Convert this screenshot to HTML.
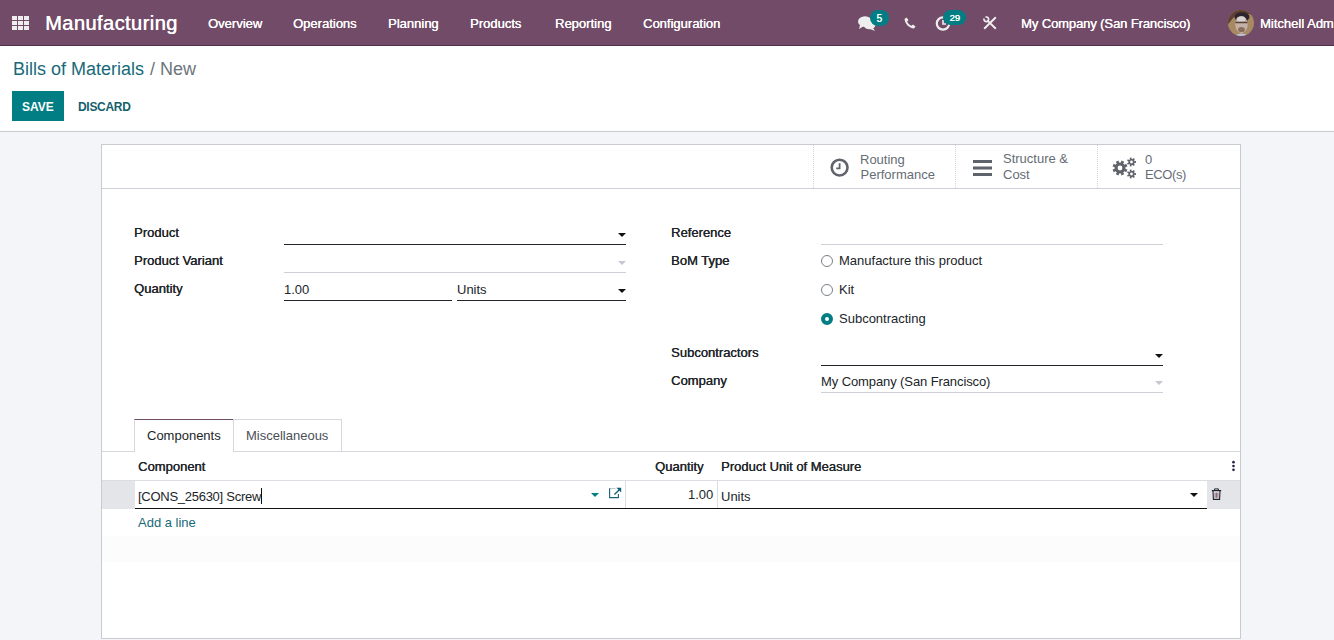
<!DOCTYPE html>
<html><head><meta charset="utf-8">
<style>
*{margin:0;padding:0;box-sizing:border-box}
html,body{width:1334px;height:640px;overflow:hidden;background:#F4F5F9;font-family:"Liberation Sans",sans-serif;font-size:13px;color:#212529}
.a{position:absolute;white-space:nowrap;line-height:1}
#nav{position:absolute;left:0;top:0;width:1334px;height:46px;background:#714B67;border-bottom:1px solid #50304A}
#nav .a{color:#fff;text-shadow:0.25px 0 0 #fff}
#cp{position:absolute;left:0;top:46px;width:1334px;height:86px;background:#fff;border-bottom:1px solid #C9CBD1}
#sheet{position:absolute;left:101px;top:144px;width:1140px;height:495px;background:#fff;border:1px solid #C9CBD1}
.ln{position:absolute;height:1px;background:#212529}
.lg{position:absolute;height:1px;background:#CDD0D6}
.lbl{color:#212529;text-shadow:0.35px 0 0 #212529}
.caret{position:absolute;width:0;height:0;border-left:4px solid transparent;border-right:4px solid transparent;border-top:4px solid #111}
.caretg{border-top-color:#C5C8CE}
.radio{position:absolute;width:12px;height:12px;border-radius:50%;border:1px solid #7a7f87;background:#fff}
.bb{color:#666c75}
</style></head><body>
<div id="nav">
  <!-- app grid -->
  <svg style="position:absolute;left:12px;top:16px" width="17" height="14" viewBox="0 0 17 14">
    <g fill="#eee">
      <rect x="0" y="0" width="5" height="4"/><rect x="6" y="0" width="5" height="4"/><rect x="12" y="0" width="5" height="4"/>
      <rect x="0" y="5" width="5" height="4"/><rect x="6" y="5" width="5" height="4"/><rect x="12" y="5" width="5" height="4"/>
      <rect x="0" y="10" width="5" height="4"/><rect x="6" y="10" width="5" height="4"/><rect x="12" y="10" width="5" height="4"/>
    </g>
  </svg>
  <span class="a" style="left:45px;top:13px;font-size:20px;letter-spacing:0.45px;text-shadow:0.5px 0 0 #fff">Manufacturing</span>
  <span class="a" style="left:208px;top:17px">Overview</span>
  <span class="a" style="left:293px;top:17px">Operations</span>
  <span class="a" style="left:388px;top:17px">Planning</span>
  <span class="a" style="left:470px;top:17px">Products</span>
  <span class="a" style="left:555px;top:17px">Reporting</span>
  <span class="a" style="left:643px;top:17px">Configuration</span>

  <!-- chat -->
  <svg style="position:absolute;left:858px;top:16px" width="18" height="15" viewBox="0 0 18 15">
    <ellipse cx="7" cy="5.5" rx="7" ry="5.2" fill="#eee"/>
    <path d="M2 9 L1 13 L6 10 Z" fill="#eee"/>
    <ellipse cx="11.5" cy="9" rx="6" ry="4.2" fill="#eee"/>
    <path d="M15 12 L17 15 L12 13 Z" fill="#eee"/>
  </svg>
  <div style="position:absolute;left:870px;top:10px;width:19px;height:16px;border-radius:8px;background:#017E84"></div>
  <span class="a" style="left:876.5px;top:14px;font-size:10px;text-shadow:0.3px 0 0 #fff">5</span>
  <!-- phone -->
  <svg style="position:absolute;left:904px;top:17px" width="12" height="12" viewBox="0 0 12 12">
    <path d="M2.5 0.5 L4.5 3 L3.2 4.6 C4 6.6 5.4 8 7.4 8.8 L9 7.5 L11.5 9.5 L10 11.5 C5 11 1 7 0.5 2 Z" fill="#eee"/>
  </svg>
  <!-- activity clock -->
  <svg style="position:absolute;left:935px;top:15px" width="17" height="17" viewBox="0 0 17 17">
    <circle cx="8" cy="8.5" r="6.2" fill="none" stroke="#eee" stroke-width="2.2"/>
    <path d="M8 5 V9 H11" fill="none" stroke="#eee" stroke-width="1.6"/>
  </svg>
  <div style="position:absolute;left:943px;top:10px;width:23px;height:15px;border-radius:8px;background:#017E84"></div>
  <span class="a" style="left:949.5px;top:13px;font-size:9.5px;text-shadow:0.3px 0 0 #fff">29</span>
  <!-- tools -->
  <svg style="position:absolute;left:983px;top:16px" width="14" height="14" viewBox="0 0 14 14">
    <path d="M4.6 4.6 L12.8 12.8 M12.8 1.2 L1.2 12.8" stroke="#eee" stroke-width="2"/>
    <path d="M2.51 1.14 A2.3 2.3 0 1 1 1.14 2.51" fill="none" stroke="#eee" stroke-width="1.7"/>
  </svg>
  <span class="a" style="left:1021px;top:17px;letter-spacing:-0.1px">My Company (San Francisco)</span>
  <!-- avatar -->
  <svg style="position:absolute;left:1228px;top:10px" width="26" height="26" viewBox="0 0 26 26">
    <defs><clipPath id="av"><circle cx="13" cy="13" r="13"/></clipPath></defs>
    <g clip-path="url(#av)">
      <rect width="26" height="26" fill="#a88a62"/>
      <path d="M0 0 H26 V6 C20 2 8 2 2 12 L0 14 Z" fill="#5e3f30"/>
      <ellipse cx="14" cy="7" rx="7.5" ry="4.8" fill="#2e2430"/>
      <ellipse cx="13.5" cy="14.5" rx="6.2" ry="8.5" fill="#c4b2a8"/>
      <ellipse cx="13" cy="9" rx="4.5" ry="2.6" fill="#d8d2d2"/>
      <path d="M7.5 12.5 H19.5" stroke="#5a4236" stroke-width="1.5"/>
      <ellipse cx="13.5" cy="19.5" rx="3.4" ry="2.6" fill="#8a6e5c"/>
      <path d="M7 26 C9 22.5 18 22.5 20 26 Z" fill="#b9c2d2"/>
    </g>
  </svg>
  <span class="a" style="left:1260px;top:17px">Mitchell Admin</span>
</div>

<div id="cp">
  <span class="a" style="left:13px;top:14px;font-size:18px;color:#17697a">Bills of Materials</span>
  <span class="a" style="left:150px;top:14px;font-size:18px;color:#6c757d">/ New</span>
  <div style="position:absolute;left:12px;top:45px;width:52px;height:30px;background:#017E84"></div>
  <span class="a" style="left:22px;top:55px;font-size:12px;font-weight:bold;color:#fff">SAVE</span>
  <span class="a" style="left:78px;top:55px;font-size:12px;font-weight:bold;color:#145f6c;letter-spacing:-0.3px">DISCARD</span>
</div>

<div id="sheet"></div>
<!-- button box -->
<div class="lg" style="left:102px;top:188px;width:1138px"></div>
<div style="position:absolute;left:813px;top:145px;width:0;height:43px;border-left:1px dotted #D0D4DA"></div>
<div style="position:absolute;left:955px;top:145px;width:0;height:43px;border-left:1px dotted #D0D4DA"></div>
<div style="position:absolute;left:1097px;top:145px;width:0;height:43px;border-left:1px dotted #D0D4DA"></div>
<svg style="position:absolute;left:830px;top:158px" width="20" height="20" viewBox="0 0 20 20">
  <circle cx="9.6" cy="9.6" r="7.9" fill="none" stroke="#5f636b" stroke-width="2.6"/>
  <path d="M9.6 5.2 V10.4 H6.2" fill="none" stroke="#5f636b" stroke-width="1.8"/>
</svg>
<span class="a bb" style="left:860px;top:153px">Routing</span>
<span class="a bb" style="left:860.5px;top:168px">Performance</span>
<svg style="position:absolute;left:973px;top:160px" width="20" height="16" viewBox="0 0 20 16">
  <g fill="#5f636b"><rect x="0" y="0" width="19" height="3"/><rect x="0" y="6.5" width="19" height="3"/><rect x="0" y="13" width="19" height="3"/></g>
</svg>
<span class="a bb" style="left:1003px;top:152px">Structure &amp;</span>
<span class="a bb" style="left:1003px;top:168px">Cost</span>
<svg style="position:absolute;left:1112px;top:157px" width="25" height="22" viewBox="0 0 25 22">
  <g fill="#5f636b" fill-rule="evenodd">
  <path d="M13.51 11.98 L15.46 12.48 L14.31 15.23 L12.59 14.20 L11.20 15.59 L12.23 17.31 L9.48 18.46 L8.98 16.51 L7.02 16.51 L6.52 18.46 L3.77 17.31 L4.80 15.59 L3.41 14.20 L1.69 15.23 L0.54 12.48 L2.49 11.98 L2.49 10.02 L0.54 9.52 L1.69 6.77 L3.41 7.80 L4.80 6.41 L3.77 4.69 L6.52 3.54 L7.02 5.49 L8.98 5.49 L9.48 3.54 L12.23 4.69 L11.20 6.41 L12.59 7.80 L14.31 6.77 L15.46 9.52 L13.51 10.02 Z M10.40 11.00 A2.4 2.4 0 1 0 5.60 11.00 A2.4 2.4 0 1 0 10.40 11.00 Z"/>
  <path d="M22.60 4.22 L24.01 4.11 L24.01 5.89 L22.60 5.78 L22.05 6.94 L23.01 7.97 L21.61 9.09 L20.82 7.91 L19.57 8.20 L19.37 9.60 L17.62 9.20 L18.05 7.85 L17.04 7.05 L15.82 7.76 L15.05 6.15 L16.37 5.64 L16.37 4.36 L15.05 3.85 L15.82 2.24 L17.04 2.95 L18.05 2.15 L17.62 0.80 L19.37 0.40 L19.57 1.80 L20.82 2.09 L21.61 0.91 L23.01 2.03 L22.05 3.06 Z M20.90 5.00 A1.4 1.4 0 1 0 18.10 5.00 A1.4 1.4 0 1 0 20.90 5.00 Z"/>
  <path d="M22.60 16.22 L24.01 16.11 L24.01 17.89 L22.60 17.78 L22.05 18.94 L23.01 19.97 L21.61 21.09 L20.82 19.91 L19.57 20.20 L19.37 21.60 L17.62 21.20 L18.05 19.850 L17.04 19.05 L15.82 19.76 L15.05 18.15 L16.37 17.64 L16.37 16.36 L15.05 15.85 L15.82 14.24 L17.04 14.95 L18.05 14.15 L17.62 12.80 L19.37 12.40 L19.57 13.80 L20.82 14.09 L21.61 12.91 L23.01 14.03 L22.05 15.06 Z M20.90 17.00 A1.4 1.4 0 1 0 18.10 17.00 A1.4 1.4 0 1 0 20.90 17.00 Z"/>
  </g>
</svg>
<span class="a bb" style="left:1145px;top:153px">0</span>
<span class="a bb" style="left:1145px;top:168px;letter-spacing:-0.4px">ECO(s)</span>

<!-- left group -->
<span class="a lbl" style="left:134px;top:226px">Product</span>
<div class="ln" style="left:284px;top:244px;width:342px"></div>
<div class="caret" style="left:618px;top:233px"></div>
<span class="a lbl" style="left:134px;top:254px">Product Variant</span>
<div class="lg" style="left:284px;top:272px;width:342px"></div>
<div class="caret caretg" style="left:618px;top:261px"></div>
<span class="a lbl" style="left:134px;top:282px">Quantity</span>
<span class="a" style="left:284px;top:283px">1.00</span>
<div class="ln" style="left:284px;top:300px;width:168px"></div>
<span class="a" style="left:457px;top:283px">Units</span>
<div class="ln" style="left:457px;top:300px;width:169px"></div>
<div class="caret" style="left:618px;top:289px"></div>

<!-- right group -->
<span class="a lbl" style="left:671px;top:226px">Reference</span>
<div class="lg" style="left:821px;top:244px;width:342px"></div>
<span class="a lbl" style="left:671px;top:254px">BoM Type</span>
<div class="radio" style="left:821px;top:255px"></div>
<span class="a" style="left:839px;top:254px">Manufacture this product</span>
<div class="radio" style="left:821px;top:284px"></div>
<span class="a" style="left:839px;top:283px">Kit</span>
<div class="radio" style="left:821px;top:313px;border:4px solid #017E84"></div>
<span class="a" style="left:839px;top:312px">Subcontracting</span>
<span class="a lbl" style="left:671px;top:346px">Subcontractors</span>
<div class="ln" style="left:821px;top:365px;width:342px"></div>
<div class="caret" style="left:1155px;top:354px"></div>
<span class="a lbl" style="left:671px;top:374px">Company</span>
<span class="a" style="left:821px;top:375px;letter-spacing:-0.1px">My Company (San Francisco)</span>
<div class="lg" style="left:821px;top:392px;width:342px"></div>
<div class="caret caretg" style="left:1155px;top:381px"></div>

<!-- tabs -->
<div class="lg" style="left:102px;top:451px;width:1138px;background:#D5D8DD"></div>
<div style="position:absolute;left:134px;top:419px;width:100px;height:33px;background:#fff;border:1px solid #D5D8DD;border-top-color:#714B67;border-bottom:none"></div>
<div style="position:absolute;left:233px;top:419px;width:109px;height:32px;border:1px solid #D5D8DD;border-bottom:none"></div>
<span class="a" style="left:147px;top:429px;color:#212529">Components</span>
<span class="a" style="left:246px;top:429px;color:#4a4f57">Miscellaneous</span>

<!-- list -->
<span class="a lbl" style="left:138px;top:460px">Component</span>
<span class="a lbl" style="left:655px;top:460px">Quantity</span>
<span class="a lbl" style="left:721px;top:460px">Product Unit of Measure</span>
<svg style="position:absolute;left:1231px;top:460px" width="5" height="12" viewBox="0 0 5 12"><g fill="#2a2540"><circle cx="2.5" cy="2.2" r="1.35"/><circle cx="2.5" cy="6" r="1.35"/><circle cx="2.5" cy="9.8" r="1.35"/></g></svg>
<div class="lg" style="left:102px;top:480px;width:1138px;background:#DADDE2"></div>
<div style="position:absolute;left:102px;top:481px;width:33px;height:28px;background:#E4E5E8"></div>
<div style="position:absolute;left:1207px;top:481px;width:33px;height:28px;background:#E4E5E8"></div>
<div style="position:absolute;left:625px;top:481px;width:1px;height:27px;background:#DADDE2"></div>
<div style="position:absolute;left:717px;top:481px;width:1px;height:27px;background:#DADDE2"></div>
<span class="a" style="left:138px;top:490px;letter-spacing:-0.27px">[CONS_25630] Screw</span>
<div style="position:absolute;left:261px;top:488px;width:1px;height:16px;background:#111"></div>
<div class="caret" style="left:591px;top:493px;border-top-color:#017E84"></div>
<svg style="position:absolute;left:608px;top:487px" width="14" height="12" viewBox="0 0 14 12">
  <path d="M1.6 1.6 H7.5" fill="none" stroke="#c5c9cf" stroke-width="1.1"/>
  <path d="M1.6 1.2 V10.6 H10.4 V7" fill="none" stroke="#17607a" stroke-width="1.1"/>
  <path d="M13.2 0.8 V5.6 L8.4 0.8 Z" fill="#0b5f78"/>
  <path d="M11.6 2.4 L6.4 7.6" stroke="#0e6675" stroke-width="1.4"/>
</svg>
<span class="a" style="left:688px;top:488px">1.00</span>
<span class="a" style="left:721px;top:490px">Units</span>
<div class="caret" style="left:1190px;top:493px"></div>
<div class="ln" style="left:135px;top:508px;width:1072px;background:#111"></div>
<svg style="position:absolute;left:1211px;top:488px" width="11" height="13" viewBox="0 0 11 13">
  <path d="M0.8 2.6 H10.2" stroke="#1f2330" stroke-width="1.2"/>
  <path d="M3.6 2.4 V0.9 H7.4 V2.4" fill="none" stroke="#1f2330" stroke-width="1"/>
  <path d="M2 3 L2.4 11.4 H8.6 L9 3" fill="none" stroke="#1f2330" stroke-width="1.1"/>
  <path d="M4.1 4.6 V9.8 M5.5 4.6 V9.8 M6.9 4.6 V9.8" stroke="#7a4a5a" stroke-width="0.8"/>
</svg>
<span class="a" style="left:138px;top:516px;color:#176a7a">Add a line</span>
<div style="position:absolute;left:102px;top:536px;width:1138px;height:26px;background:#FCFCFD"></div>

</body></html>
